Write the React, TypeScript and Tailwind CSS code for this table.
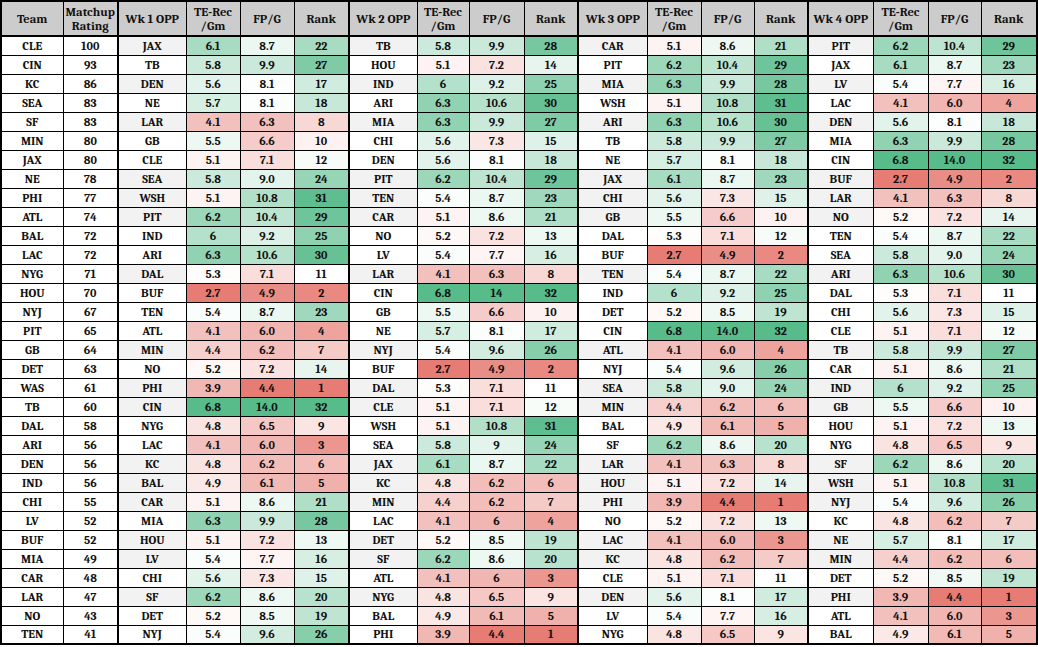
import React from "react";

// team | rating | wk1 | wk2 | wk3 | wk4  (each week: opp te fp rank)
const rows = [
  "CLE|100|JAX 6.1 8.7 22|TB 5.8 9.9 28|CAR 5.1 8.6 21|PIT 6.2 10.4 29",
  "CIN|93|TB 5.8 9.9 27|HOU 5.1 7.2 14|PIT 6.2 10.4 29|JAX 6.1 8.7 23",
  "KC|86|DEN 5.6 8.1 17|IND 6 9.2 25|MIA 6.3 9.9 28|LV 5.4 7.7 16",
  "SEA|83|NE 5.7 8.1 18|ARI 6.3 10.6 30|WSH 5.1 10.8 31|LAC 4.1 6.0 4",
  "SF|83|LAR 4.1 6.3 8|MIA 6.3 9.9 27|ARI 6.3 10.6 30|DEN 5.6 8.1 18",
  "MIN|80|GB 5.5 6.6 10|CHI 5.6 7.3 15|TB 5.8 9.9 27|MIA 6.3 9.9 28",
  "JAX|80|CLE 5.1 7.1 12|DEN 5.6 8.1 18|NE 5.7 8.1 18|CIN 6.8 14.0 32",
  "NE|78|SEA 5.8 9.0 24|PIT 6.2 10.4 29|JAX 6.1 8.7 23|BUF 2.7 4.9 2",
  "PHI|77|WSH 5.1 10.8 31|TEN 5.4 8.7 23|CHI 5.6 7.3 15|LAR 4.1 6.3 8",
  "ATL|74|PIT 6.2 10.4 29|CAR 5.1 8.6 21|GB 5.5 6.6 10|NO 5.2 7.2 14",
  "BAL|72|IND 6 9.2 25|NO 5.2 7.2 13|DAL 5.3 7.1 12|TEN 5.4 8.7 22",
  "LAC|72|ARI 6.3 10.6 30|LV 5.4 7.7 16|BUF 2.7 4.9 2|SEA 5.8 9.0 24",
  "NYG|71|DAL 5.3 7.1 11|LAR 4.1 6.3 8|TEN 5.4 8.7 22|ARI 6.3 10.6 30",
  "HOU|70|BUF 2.7 4.9 2|CIN 6.8 14 32|IND 6 9.2 25|DAL 5.3 7.1 11",
  "NYJ|67|TEN 5.4 8.7 23|GB 5.5 6.6 10|DET 5.2 8.5 19|CHI 5.6 7.3 15",
  "PIT|65|ATL 4.1 6.0 4|NE 5.7 8.1 17|CIN 6.8 14.0 32|CLE 5.1 7.1 12",
  "GB|64|MIN 4.4 6.2 7|NYJ 5.4 9.6 26|ATL 4.1 6.0 4|TB 5.8 9.9 27",
  "DET|63|NO 5.2 7.2 14|BUF 2.7 4.9 2|NYJ 5.4 9.6 26|CAR 5.1 8.6 21",
  "WAS|61|PHI 3.9 4.4 1|DAL 5.3 7.1 11|SEA 5.8 9.0 24|IND 6 9.2 25",
  "TB|60|CIN 6.8 14.0 32|CLE 5.1 7.1 12|MIN 4.4 6.2 6|GB 5.5 6.6 10",
  "DAL|58|NYG 4.8 6.5 9|WSH 5.1 10.8 31|BAL 4.9 6.1 5|HOU 5.1 7.2 13",
  "ARI|56|LAC 4.1 6.0 3|SEA 5.8 9 24|SF 6.2 8.6 20|NYG 4.8 6.5 9",
  "DEN|56|KC 4.8 6.2 6|JAX 6.1 8.7 22|LAR 4.1 6.3 8|SF 6.2 8.6 20",
  "IND|56|BAL 4.9 6.1 5|KC 4.8 6.2 6|HOU 5.1 7.2 14|WSH 5.1 10.8 31",
  "CHI|55|CAR 5.1 8.6 21|MIN 4.4 6.2 7|PHI 3.9 4.4 1|NYJ 5.4 9.6 26",
  "LV|52|MIA 6.3 9.9 28|LAC 4.1 6 4|NO 5.2 7.2 13|KC 4.8 6.2 7",
  "BUF|52|HOU 5.1 7.2 13|DET 5.2 8.5 19|LAC 4.1 6.0 3|NE 5.7 8.1 17",
  "MIA|49|LV 5.4 7.7 16|SF 6.2 8.6 20|KC 4.8 6.2 7|MIN 4.4 6.2 6",
  "CAR|48|CHI 5.6 7.3 15|ATL 4.1 6 3|CLE 5.1 7.1 11|DET 5.2 8.5 19",
  "LAR|47|SF 6.2 8.6 20|NYG 4.8 6.5 9|DEN 5.6 8.1 17|PHI 3.9 4.4 1",
  "NO|43|DET 5.2 8.5 19|BAL 4.9 6.1 5|LV 5.4 7.7 16|ATL 4.1 6.0 3",
  "TEN|41|NYJ 5.4 9.6 26|PHI 3.9 4.4 1|NYG 4.8 6.5 9|BAL 4.9 6.1 5",
];

// opponent cells shaded grey on these rows
const grayRows = new Set([0, 2, 4, 7, 8, 9, 12, 16, 18, 19, 22, 23, 24, 26, 27, 29]);

const GREEN = [87, 187, 138];
const RED = [230, 124, 115];

const mix = (c: number[], t: number) => {
  const k = Math.max(0, Math.min(1, t));
  const [r, g, b] = c.map((v) => Math.round(255 - k * (255 - v)));
  return `rgb(${r}, ${g}, ${b})`;
};

const scale = (v: number, min: number, mid: number, max: number) =>
  v >= mid ? mix(GREEN, (v - mid) / (max - mid)) : mix(RED, (mid - v) / (mid - min));

const stats = [
  { min: 2.7, mid: 5.35, max: 6.8 },
  { min: 4.4, mid: 8.0, max: 14.0 },
  { min: 1, mid: 11, max: 32 },
];

const widths = [62, 55, 68, 54, 54, 55, 68, 52, 55, 54, 69, 54, 53, 54, 65, 55, 53, 56];

const cell = "border border-black p-0 text-center align-middle";

export default function App() {
  return (
    <div className="bg-white w-[1038px] h-[647px] overflow-hidden font-serif [font-family:Liberation_Serif,serif] font-bold text-[#111]">
      <table className="table-fixed border-collapse border-2 border-black w-[1036px]">
        <colgroup>
          {widths.map((w, i) => (
            <col key={i} style={{ width: w }} />
          ))}
        </colgroup>
        <thead>
          <tr className="bg-[#cccccc] text-[12.5px] leading-[14px]">
            <th className={`${cell} h-[35px] border-b-2`}>Team</th>
            <th className={`${cell} border-b-2`}>
              Matchup
              <br />
              Rating
            </th>
            {[1, 2, 3, 4].map((wk) => (
              <React.Fragment key={wk}>
                <th className={`${cell} border-b-2 border-l-2`}>Wk {wk} OPP</th>
                <th className={`${cell} border-b-2`}>
                  TE-Rec
                  <br />
                  /Gm
                </th>
                <th className={`${cell} border-b-2`}>FP/G</th>
                <th className={`${cell} border-b-2`}>Rank</th>
              </React.Fragment>
            ))}
          </tr>
        </thead>
        <tbody className="text-[12px] leading-[14px]">
          {rows.map((line, r) => {
            const [team, rating, ...weeks] = line.split("|");
            return (
              <tr key={team}>
                <td className={`${cell} h-[19px]`}>{team}</td>
                <td className={cell}>{rating}</td>
                {weeks.map((wk, w) => {
                  const [opp, ...vals] = wk.split(" ");
                  return (
                    <React.Fragment key={w}>
                      <td
                        className={`${cell} border-l-2 ${grayRows.has(r) ? "bg-[#f2f2f2]" : "bg-white"}`}
                      >
                        {opp}
                      </td>
                      {vals.map((v, i) => (
                        <td
                          key={i}
                          className={cell}
                          style={{
                            backgroundColor: scale(
                              parseFloat(v),
                              stats[i].min,
                              stats[i].mid,
                              stats[i].max
                            ),
                          }}
                        >
                          {v}
                        </td>
                      ))}
                    </React.Fragment>
                  );
                })}
              </tr>
            );
          })}
        </tbody>
      </table>
    </div>
  );
}
